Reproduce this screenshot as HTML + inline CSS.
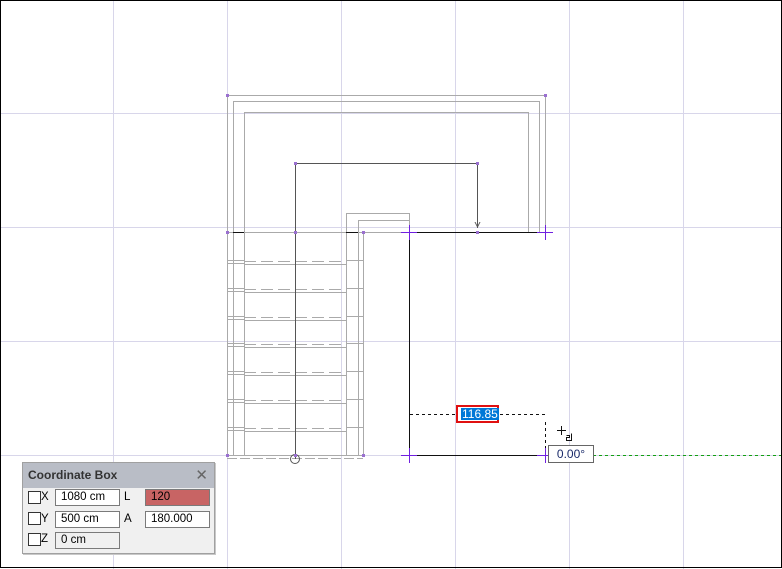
<!DOCTYPE html>
<html><head><meta charset="utf-8">
<style>
html,body{margin:0;padding:0;background:#fff;}
#c{position:relative;width:782px;height:569px;overflow:hidden;background:#fff;font-family:"Liberation Sans",Tahoma,sans-serif;}
svg{position:absolute;left:0;top:0;}
.cb{position:absolute;left:22px;top:462px;width:191px;height:90px;background:#f0f0f0;border:1px solid #a0a0a0;box-shadow:1px 1px 0 #c8c8c8;font-size:12px;color:#000;}
.hd{height:25px;background:#b9bdc6;font-weight:bold;color:#333;line-height:25px;padding-left:5px;font-size:12px;}
.hd span{position:absolute;right:6px;top:0;font-weight:normal;color:#666;font-size:15px;}
.in{position:absolute;border:1px solid #7a7a7a;background:#fff;line-height:15px;padding-left:5px;box-sizing:border-box;height:17px;font-size:11.5px;}
.ck{position:absolute;width:11px;height:11px;border:1px solid #333;background:#fff;}
.lb{position:absolute;font-size:11.5px;}
</style></head><body>
<div id="c">
<svg width="782" height="569" viewBox="0 0 782 569" shape-rendering="crispEdges">
<g stroke="#d8d6ea" stroke-width="1">
<line x1="113.5" y1="0" x2="113.5" y2="569"/><line x1="227.5" y1="0" x2="227.5" y2="569"/>
<line x1="341.5" y1="0" x2="341.5" y2="569"/><line x1="455.5" y1="0" x2="455.5" y2="569"/>
<line x1="569.5" y1="0" x2="569.5" y2="569"/><line x1="683.5" y1="0" x2="683.5" y2="569"/>
<line x1="0" y1="113.5" x2="782" y2="113.5"/><line x1="0" y1="227.5" x2="782" y2="227.5"/>
<line x1="0" y1="341.5" x2="782" y2="341.5"/><line x1="0" y1="455.5" x2="782" y2="455.5"/>
</g>
<g stroke="#aaaaaa" fill="none" stroke-width="1">
<path d="M227.5 455.5V95.5H545.5V232.5"/>
<path d="M233.5 455.5V101.5H539.5V232.5"/>
<path d="M244.5 455.5V112.5H528.5V232.5"/>
<path d="M346.5 455.5V213.5H409.5V232"/>
<path d="M358.5 455.5V220.5H409.5"/>
<line x1="363.5" y1="232" x2="363.5" y2="455.5"/>
<line x1="227" y1="232.5" x2="409" y2="232.5"/>
<line x1="227" y1="455.5" x2="363" y2="455.5"/>
<line x1="227" y1="458.5" x2="363" y2="458.5" stroke-dasharray="10,3"/>
</g>
<g stroke="#aaaaaa" stroke-width="1">
<line x1="244" y1="264.5" x2="346" y2="264.5"/><line x1="244" y1="292.5" x2="346" y2="292.5"/>
<line x1="244" y1="320.5" x2="346" y2="320.5"/><line x1="244" y1="347.5" x2="346" y2="347.5"/>
<line x1="244" y1="375.5" x2="346" y2="375.5"/><line x1="244" y1="403.5" x2="346" y2="403.5"/>
<line x1="244" y1="431.5" x2="346" y2="431.5"/>
</g>
<g stroke="#aaaaaa" stroke-width="1" stroke-dasharray="12,5">
<line x1="244" y1="261.5" x2="346" y2="261.5"/><line x1="244" y1="289.5" x2="346" y2="289.5"/>
<line x1="244" y1="317.5" x2="346" y2="317.5"/><line x1="244" y1="344.5" x2="346" y2="344.5"/>
<line x1="244" y1="372.5" x2="346" y2="372.5"/><line x1="244" y1="400.5" x2="346" y2="400.5"/>
<line x1="244" y1="428.5" x2="346" y2="428.5"/>
</g>
<g stroke="#aaaaaa" stroke-width="1">
<line x1="227" y1="260.5" x2="244" y2="260.5"/><line x1="227" y1="263.5" x2="244" y2="263.5"/>
<line x1="227" y1="288.5" x2="244" y2="288.5"/><line x1="227" y1="291.5" x2="244" y2="291.5"/>
<line x1="227" y1="316.5" x2="244" y2="316.5"/><line x1="227" y1="319.5" x2="244" y2="319.5"/>
<line x1="227" y1="343.5" x2="244" y2="343.5"/><line x1="227" y1="346.5" x2="244" y2="346.5"/>
<line x1="227" y1="371.5" x2="244" y2="371.5"/><line x1="227" y1="374.5" x2="244" y2="374.5"/>
<line x1="227" y1="399.5" x2="244" y2="399.5"/><line x1="227" y1="402.5" x2="244" y2="402.5"/>
<line x1="227" y1="427.5" x2="244" y2="427.5"/><line x1="227" y1="430.5" x2="244" y2="430.5"/>
<line x1="346" y1="260.5" x2="363" y2="260.5"/><line x1="346" y1="288.5" x2="363" y2="288.5"/>
<line x1="346" y1="316.5" x2="363" y2="316.5"/><line x1="346" y1="343.5" x2="363" y2="343.5"/>
<line x1="346" y1="371.5" x2="363" y2="371.5"/><line x1="346" y1="399.5" x2="363" y2="399.5"/>
<line x1="346" y1="427.5" x2="363" y2="427.5"/>
</g>
<g stroke="#111" stroke-width="1" fill="none">
<line x1="233" y1="232.5" x2="244" y2="232.5"/>
<line x1="346" y1="232.5" x2="358" y2="232.5"/>
<line x1="409" y1="232.5" x2="552" y2="232.5"/>
<line x1="409.5" y1="232" x2="409.5" y2="455"/>
<line x1="409" y1="455.5" x2="545" y2="455.5"/>
</g>
<g stroke="#555" stroke-width="1" fill="none">
<path d="M295.5 459V163.5H477.5V228"/>
<path d="M475 222l2.5 5 2.5-5"/>
<circle cx="295" cy="459" r="4.5" shape-rendering="auto"/>
</g>
<g stroke="#111" stroke-width="1" stroke-dasharray="3,3">
<line x1="410" y1="414.5" x2="545" y2="414.5"/>
<line x1="545.5" y1="422" x2="545.5" y2="455"/>
</g>
<line x1="593" y1="455.5" x2="782" y2="455.5" stroke="#12a012" stroke-width="1" stroke-dasharray="3,3"/>
<g stroke="#7020e0" stroke-width="1">
<line x1="401" y1="232.5" x2="417" y2="232.5"/><line x1="409.5" y1="225" x2="409.5" y2="240"/>
<line x1="537" y1="232.5" x2="553" y2="232.5"/><line x1="545.5" y1="225" x2="545.5" y2="240"/>
<line x1="401" y1="455.5" x2="417" y2="455.5"/><line x1="409.5" y1="448" x2="409.5" y2="463"/>
<line x1="537" y1="455.5" x2="553" y2="455.5"/><line x1="545.5" y1="448" x2="545.5" y2="463"/>
</g>
<g fill="#9a70d0">
<rect x="226" y="94" width="3" height="3"/><rect x="544" y="94" width="3" height="3"/>
<rect x="294" y="162" width="3" height="3"/><rect x="476" y="162" width="3" height="3"/>
<rect x="226" y="231" width="3" height="3"/><rect x="294" y="231" width="3" height="3"/>
<rect x="362" y="231" width="3" height="3"/><rect x="476" y="231" width="3" height="3"/>
<rect x="226" y="454" width="3" height="3"/><rect x="294" y="454" width="3" height="3"/>
<rect x="362" y="454" width="3" height="3"/>
</g>
<g stroke="#111" stroke-width="1" fill="none">
<line x1="557" y1="430.5" x2="566" y2="430.5"/><line x1="561.5" y1="426" x2="561.5" y2="435"/>
<path d="M566.5 435.5h3v2h-3v3h5v-7"/>
</g>
<rect x="0.5" y="0.5" width="781" height="567" fill="none" stroke="#000"/>
</svg>
<div style="position:absolute;left:456px;top:405px;width:39px;height:14px;border:2px solid #e01010;background:#fff;">
<div style="position:absolute;left:3px;top:1px;height:12px;background:#0078d7;color:#fff;font-size:12px;line-height:12px;padding:0 1px;">116.85</div></div>
<div style="position:absolute;left:548px;top:445px;width:44px;height:16px;border:1px solid #666;background:#fff;font-size:12px;line-height:16px;text-align:center;color:#1a2a6a;">0.00°</div>
<div class="cb">
<div class="hd">Coordinate Box<span>✕</span></div>
<div class="ck" style="left:5px;top:28px"></div><div class="lb" style="left:18px;top:28px">X</div>
<div class="in" style="left:32px;top:26px;width:65px">1080 cm</div>
<div class="lb" style="left:101px;top:28px">L</div>
<div class="in" style="left:122px;top:26px;width:65px;background:#c86464">120</div>
<div class="ck" style="left:5px;top:49px"></div><div class="lb" style="left:18px;top:50px">Y</div>
<div class="in" style="left:32px;top:48px;width:65px">500 cm</div>
<div class="lb" style="left:101px;top:50px">A</div>
<div class="in" style="left:122px;top:48px;width:65px">180.000</div>
<div class="ck" style="left:5px;top:70px"></div><div class="lb" style="left:18px;top:70px">Z</div>
<div class="in" style="left:32px;top:69px;width:65px;background:#f0f0f0">0 cm</div>
</div>
</div>
</body></html>
